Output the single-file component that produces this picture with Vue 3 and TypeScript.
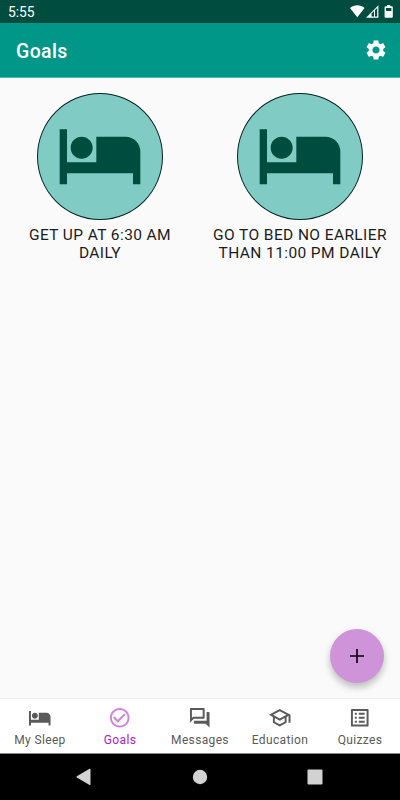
<script setup lang="ts">
interface Goal {
  id: number
  lines: string[]
}

interface Tab {
  label: string
  icon: string
  active?: boolean
}

const bedPath =
  'M7 13c1.66 0 3-1.34 3-3S8.66 7 7 7s-3 1.34-3 3 1.34 3 3 3zm12-6h-8v7H3V5H1v15h2v-3h18v3h2v-9c0-2.21-1.79-4-4-4z'

const goals: Goal[] = [
  { id: 1, lines: ['GET UP AT 6:30 AM', 'DAILY'] },
  { id: 2, lines: ['GO TO BED NO EARLIER', 'THAN 11:00 PM DAILY'] },
]

const tabs: Tab[] = [
  { label: 'My Sleep', icon: bedPath },
  {
    label: 'Goals',
    active: true,
    icon: 'M16.59 7.58L10 14.17l-3.59-3.58L5 12l5 5 8-8-1.41-1.42zM12 2C6.48 2 2 6.48 2 12s4.48 10 10 10 10-4.48 10-10S17.52 2 12 2zm0 18c-4.42 0-8-3.58-8-8s3.58-8 8-8 8 3.58 8 8-3.58 8-8 8z',
  },
  {
    label: 'Messages',
    icon: 'M15 4v7H5.17L4 12.17V4h11m1-2H3c-.55 0-1 .45-1 1v14l4-4h10c.55 0 1-.45 1-1V3c0-.55-.45-1-1-1zm5 4h-2v9H6v2c0 .55.45 1 1 1h11l4 4V7c0-.55-.45-1-1-1z',
  },
  {
    label: 'Education',
    icon: 'M12 3L1 9l4 2.18v6L12 21l7-3.82v-6l2-1.09V17h2V9L12 3zm6.82 6L12 12.72 5.18 9 12 5.28 18.82 9zM17 15.99l-5 2.73-5-2.73v-3.72L12 15l5-2.73v3.72z',
  },
  {
    label: 'Quizzes',
    icon: 'M19 5v14H5V5h14m1.1-2H3.9c-.5 0-.9.4-.9.9v16.2c0 .4.4.9.9.9h16.2c.4 0 .9-.5.9-.9V3.9c0-.5-.5-.9-.9-.9zM11 7h6v2h-6V7zm0 4h6v2h-6v-2zm0 4h6v2h-6v-2zM7 7h2v2H7V7zm0 4h2v2H7v-2zm0 4h2v2H7v-2z',
  },
]
</script>

<template>
  <div class="screen">
    <div class="status">
      <span class="clock">5:55</span>
      <svg class="status-icons" width="46" height="16" viewBox="0 0 46 16">
        <path d="M0 4.100C4.100.3 10.500.3 14.600 4.100L7.300 13.200z" fill="#fff" />
        <path d="M16 13.700L28.400 1.200v12.500z" fill="#fff" />
        <path d="M21.500 12.500V9.400L24 6.900v5.600zM25 6l2.200-2.100v8.600H25z" fill="#004d40" />
        <path d="M37.200 1h3v1.300h1.700c.5 0 .9.4.9.9v9.600c0 .5-.4.9-.9.9h-6.400c-.5 0-.9-.4-.9-.9V3.200c0-.5.4-.9.9-.9h1.700z" fill="#fff" />
        <path d="M36 4h5.400v3H36z" fill="#004d40" />
      </svg>
    </div>

    <header class="appbar">
      <h1 class="title">Goals</h1>
      <button class="icon-button" aria-label="Settings">
        <svg width="24" height="24" viewBox="0 0 24 24" fill="#fff">
          <path
            d="M19.14 12.94c.04-.3.06-.61.06-.94 0-.32-.02-.64-.07-.94l2.030-1.580c.18-.14.23-.41.12-.61l-1.920-3.320c-.12-.22-.37-.29-.59-.22l-2.390.96c-.5-.38-1.030-.7-1.620-.94l-.36-2.540c-.04-.24-.24-.41-.48-.41h-3.840c-.24 0-.43.17-.47.41l-.36 2.540c-.59.24-1.130.57-1.620.94l-2.390-.96c-.22-.08-.47 0-.59.22L2.740 8.870c-.12.21-.08.47.12.61l2.030 1.580c-.05.3-.09.63-.09.94s.02.64.07.94l-2.030 1.580c-.18.14-.23.41-.12.61l1.920 3.320c.12.22.37.29.59.22l2.390-.96c.5.38 1.030.7 1.620.94l.36 2.540c.05.24.24.41.48.41h3.840c.24 0 .44-.17.47-.41l.36-2.540c.59-.24 1.130-.56 1.620-.94l2.390.96c.22.08.47 0 .59-.22l1.920-3.320c.12-.22.07-.47-.12-.61l-2.010-1.580zM12 15.600c-1.980 0-3.600-1.620-3.600-3.600s1.620-3.600 3.600-3.600 3.600 1.620 3.600 3.600-1.620 3.600-3.600 3.600z"
          />
        </svg>
      </button>
    </header>

    <main class="content">
      <section class="goals">
        <article v-for="goal in goals" :key="goal.id" class="goal">
          <div class="badge">
            <svg width="88" height="88" viewBox="0 0 24 24" fill="#004d40">
              <path :d="bedPath" />
            </svg>
          </div>
          <p class="caption">
            <span v-for="line in goal.lines" :key="line" class="line">{{ line }}</span>
          </p>
        </article>
      </section>
      <button class="fab" aria-label="Add goal">
        <svg width="14" height="14" viewBox="0 0 14 14" fill="#000">
          <path d="M6.200 0h1.600v6.200H14v1.600H7.800V14H6.200V7.800H0V6.200h6.200z" />
        </svg>
      </button>
    </main>

    <nav class="tabs">
      <button v-for="tab in tabs" :key="tab.label" class="tab" :class="{ active: tab.active }">
        <svg width="23.5" height="23.5" viewBox="0 0 24 24"><path :d="tab.icon" /></svg>
        <span class="tab-label">{{ tab.label }}</span>
      </button>
    </nav>

    <div class="system-nav">
      <svg width="16" height="18" viewBox="0 0 16 18" fill="#d2d2d2">
        <path d="M.8 8.300L13.600.8c.5-.3.900 0 .9.500v15.100c0 .6-.4.800-.9.500L.8 9.400c-.5-.3-.5-.8 0-1.100z" />
      </svg>
      <svg width="16" height="16" viewBox="0 0 16 16" fill="#d2d2d2"><circle cx="8" cy="8" r="7.200" /></svg>
      <svg width="16" height="16" viewBox="0 0 16 16" fill="#d2d2d2">
        <rect x=".5" y=".5" width="15" height="15" rx="1" />
      </svg>
    </div>
  </div>
</template>

<style>
body {
  margin: 0;
}
</style>

<style scoped>
.screen {
  display: flex;
  flex-direction: column;
  width: 400px;
  height: 800px;
  overflow: hidden;
  background: #fafafa;
  font-family: Roboto, "Liberation Sans", sans-serif;
}

button {
  padding: 0;
  border: 0;
  background: none;
  font: inherit;
}

svg {
  display: block;
  flex: none;
}

.status {
  display: flex;
  box-sizing: border-box;
  justify-content: space-between;
  height: 23px;
  padding: 4px 7px 0 8px;
  background: #004d40;
}

.clock {
  color: #fff;
  font-size: 13.8px;
  line-height: 17px;
}

.status-icons {
  margin-right: -3px;
}

.appbar {
  display: flex;
  box-sizing: border-box;
  align-items: center;
  justify-content: space-between;
  height: 55px;
  padding: 0 12px 0 16px;
  border-bottom: 1px solid #58b3a9;
  background: #009688;
}

.title {
  margin: 0;
  padding-top: 3px;
  color: #fff;
  font-size: 19.5px;
  font-weight: 500;
  line-height: 26px;
  letter-spacing: 0.35px;
}

.content {
  display: flex;
  flex: 1;
  flex-direction: column;
  align-items: flex-end;
  justify-content: space-between;
  padding: 15px 0;
}

.goals {
  display: grid;
  grid-template-columns: 1fr 1fr;
  width: 100%;
}

.goal {
  display: flex;
  flex-direction: column;
  align-items: center;
}

.badge {
  display: flex;
  box-sizing: border-box;
  align-items: center;
  justify-content: center;
  width: 126px;
  height: 127px;
  padding-bottom: 4px;
  border: 1px solid #06241f;
  border-radius: 50%;
  background: #80cbc4;
}

.caption {
  margin: 6px 0 0;
  color: #1c1c1c;
  font-size: 15.5px;
  line-height: 18px;
  letter-spacing: 0.4px;
  text-align: center;
  white-space: nowrap;
}

.line {
  display: block;
}

.fab {
  display: flex;
  align-items: center;
  justify-content: center;
  width: 54px;
  height: 54px;
  margin-right: 16px;
  border-radius: 50%;
  background: #ce93d8;
  box-shadow: 0 5px 7px rgba(0, 0, 0, 0.2), 0 1px 10px rgba(0, 0, 0, 0.06);
}

.tabs {
  display: grid;
  box-sizing: border-box;
  grid-template-columns: repeat(5, 1fr);
  height: 55px;
  border-top: 1px solid #f1f1f1;
  background: #fff;
}

.tab {
  display: flex;
  flex-direction: column;
  align-items: center;
  padding-top: 7px;
  color: #5a5a5a;
}

.tab svg {
  fill: #5a5a5a;
}

.tab-label {
  margin-top: 2.5px;
  font-size: 12px;
  line-height: 16px;
  letter-spacing: 0.35px;
}

.tab.active {
  color: #a626ba;
}

.tab.active svg {
  fill: #ce86dc;
}

.system-nav {
  display: flex;
  box-sizing: border-box;
  align-items: center;
  justify-content: space-between;
  height: 47px;
  padding: 0 77px 0 76px;
  border-top: 1px solid #888;
  background: #000;
}
</style>
